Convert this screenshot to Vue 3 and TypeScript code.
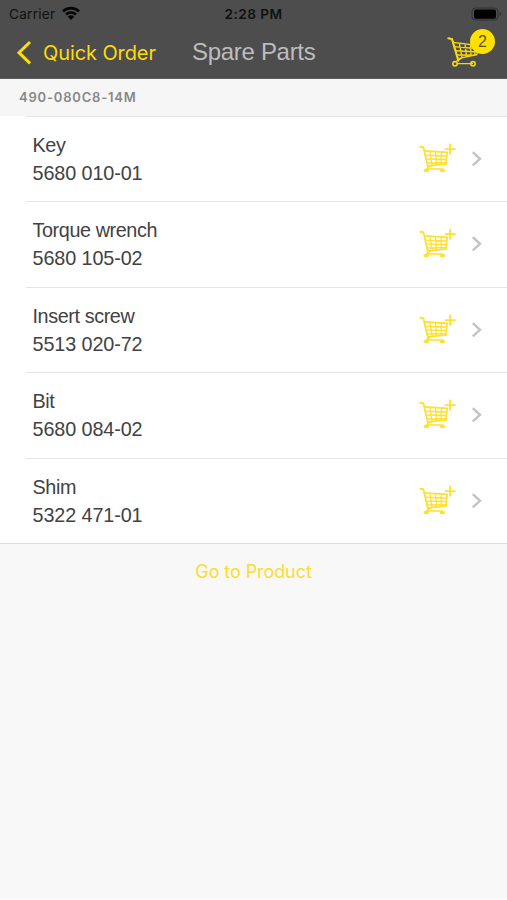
<script setup lang="ts">
interface Part {
  name: string
  code: string
}

const parts: Part[] = [
  { name: 'Key', code: '5680 010-01' },
  { name: 'Torque wrench', code: '5680 105-02' },
  { name: 'Insert screw', code: '5513 020-72' },
  { name: 'Bit', code: '5680 084-02' },
  { name: 'Shim', code: '5322 471-01' },
]
const cartCount = 2
</script>

<template>
  <div class="screen">
    <header class="header">
      <div class="status">
        <div class="carrier">
          <span>Carrier</span>
          <svg class="wifi" width="18" height="14" viewBox="0 0 18 14">
            <path d="M1 5.4a11.3 11.3 0 0 1 16 0M4 8.5a7.1 7.1 0 0 1 10 0" fill="none" stroke="#050505" stroke-width="2.6" />
            <path d="M9 14 5.9 10.8a4.5 4.5 0 0 1 6.2 0Z" fill="#050505" />
          </svg>
        </div>
        <span class="time">2:28 PM</span>
        <svg class="battery" width="32" height="14" viewBox="0 0 32 14">
          <rect x="1" y="1" width="26" height="12" rx="3.5" fill="none" stroke="#303030" />
          <rect x="3" y="2.4" width="22" height="9.4" rx="1.8" fill="#000" />
          <path d="M28.6 5v4q1.6-.6 1.6-2t-1.6-2" fill="#303030" />
        </svg>
      </div>
      <nav class="nav">
        <button class="back">
          <svg width="16" height="26" viewBox="0 0 16 26">
            <path d="M14 2 3 12.7 14 23.4" fill="none" stroke="#fbdc0b" stroke-width="3.1" />
          </svg>
          <span>Quick Order</span>
        </button>
        <h1 class="title">Spare Parts</h1>
        <button class="cart">
          <svg width="36" height="32" viewBox="0 0 36 32" fill="none" stroke="#f5d90c">
            <path d="M1.3 2.2 5 3.2 11.4 24.6" stroke-width="2.1" stroke-linecap="round" />
            <path d="M6 6.4 32 9.6 29.8 18.6 11 22.6M7.1 10.6l24 2.2M8.5 14.8l22 1.2M9.8 19l18.8.2M12.4 7.4l2.6 14M18 8l1.6 12.6M23.4 8.8l.6 11M28.4 9.4l-.6 9.6M15 22l-7 4M10 27.6h16" stroke-width="1.4" />
            <circle cx="8" cy="27.8" r="2.2" stroke-width="1.6" />
            <circle cx="26" cy="27.8" r="2.2" stroke-width="1.6" />
          </svg>
          <span class="badge">{{ cartCount }}</span>
        </button>
      </nav>
    </header>

    <h2 class="section">490-080C8-14M</h2>

    <ul class="list">
      <li v-for="part in parts" :key="part.code" class="row">
        <div class="info">
          <span class="name">{{ part.name }}</span>
          <span class="code">{{ part.code }}</span>
        </div>
        <svg class="add" width="38" height="32" viewBox="0 0 38 32" fill="none" stroke="#ffe02e">
          <path d="M1.3 3.8 4.4 4.4 9.2 24.6" stroke-width="1.9" stroke-linecap="round" />
          <path d="M5.3 7.9 28.2 9.3 27 20.9 9.3 22.8" stroke-width="1.7" />
          <path d="M6.4 12.1 27.8 13M7.5 16.2l19.9.3M8.6 20l18.5-.4M11 8.4l2 13.8M16.5 8.8l1 12.9M22.3 9.2l-.2 12M12.5 22.6l-6 3.6M7 26h17" stroke-width="1.3" />
          <path d="M6 27.4h2.4M22.2 27.4h2.4" stroke-width="3" stroke-linecap="round" />
          <path d="M31.1.8v10.8M25.8 6.2h10.8" stroke-width="1.8" />
        </svg>
        <svg class="chevron" width="12" height="16" viewBox="0 0 12 16">
          <path d="M1.8 1.2 9 7.8 1.8 14.4" fill="none" stroke="#c3c3c6" stroke-width="2.4" />
        </svg>
      </li>
    </ul>

    <button class="product">Go to Product</button>
  </div>
</template>

<style>
body {
  margin: 0;
  background: #f8f8f8;
}
</style>

<style scoped>
.screen {
  box-sizing: border-box;
  width: 507px;
  height: 900px;
  overflow: hidden;
  background: #f8f8f8;
  border-bottom: 2px solid #fcfcfc;
  font-family: Inter, "Liberation Sans", sans-serif;
}
button {
  border: 0;
  padding: 0;
  background: none;
  font-family: inherit;
}
.header {
  box-sizing: border-box;
  height: 79px;
  background: #4d4d4d;
  border-bottom: 1px solid #5b5b5b;
}
.status {
  display: grid;
  grid-template-columns: 1fr auto 1fr;
  align-items: center;
  height: 27px;
  padding: 0 4px 0 9px;
  color: #111;
  font-size: 13.7px;
}
.carrier {
  display: flex;
  align-items: center;
  gap: 7px;
  letter-spacing: 0.22px;
}
.wifi {
  margin-top: -2px;
}
.time {
  font-weight: 600;
  letter-spacing: 0.4px;
  margin-left: -5px;
}
.battery {
  justify-self: end;
}
.nav {
  display: grid;
  grid-template-columns: 176px 1fr 60px;
  height: 51px;
}
.back {
  display: flex;
  align-items: center;
  gap: 11px;
  padding-left: 16px;
  color: #fbdc0b;
  font-size: 20px;
  letter-spacing: -0.1px;
  white-space: nowrap;
}
.title {
  margin: 0;
  padding-left: 16px;
  color: #bdbdbd;
  font: 400 24px/49px "Liberation Sans", sans-serif;
  letter-spacing: -0.3px;
}
.cart {
  position: relative;
}
.cart svg {
  position: absolute;
  left: 0;
  top: 9px;
}
.badge {
  position: absolute;
  left: 23px;
  top: 2px;
  width: 25px;
  height: 25px;
  border-radius: 50%;
  background: #ffe000;
  color: #5c5310;
  font: 16px/25px "Liberation Sans", sans-serif;
  text-align: center;
}
.section {
  box-sizing: border-box;
  height: 36.5px;
  margin: 0;
  padding-left: 19px;
  background: #f6f6f6;
  color: #88888a;
  font-size: 13px;
  font-weight: 600;
  line-height: 36px;
  letter-spacing: 0.8px;
}
.list {
  margin: 0;
  padding: 0 0 0 26px;
  background: #fff;
  list-style: none;
  border-bottom: 1px solid #dcdcdc;
}
.row {
  box-sizing: border-box;
  display: flex;
  align-items: center;
  height: 85.5px;
  padding: 0 23px 0 6.5px;
  border-top: 1px solid #e5e5e5;
}
.info {
  display: flex;
  flex-direction: column;
  flex: 1;
  color: #424242;
  font: 19.8px/28px "Liberation Sans", sans-serif;
  letter-spacing: -0.1px;
}
.name {
  letter-spacing: -0.4px;
}
.add {
  margin-right: 14px;
}
.chevron {
  margin-right: 1px;
}
.product {
  display: block;
  margin: 14px auto 0;
  color: #fcdc30;
  font-size: 18px;
  line-height: 28px;
  letter-spacing: -0.08px;
}
</style>
